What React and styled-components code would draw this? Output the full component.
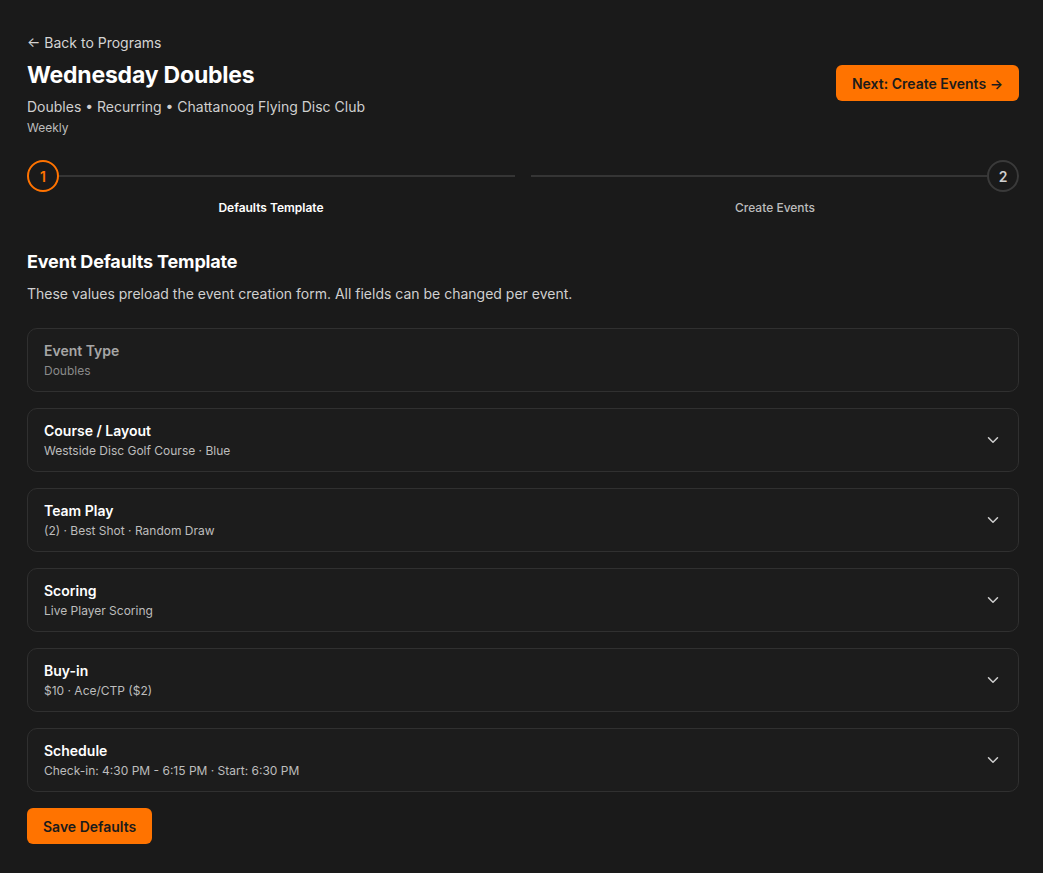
import React from 'react'
import styled, { createGlobalStyle } from 'styled-components'

const Global = createGlobalStyle`
  html, body {
    margin: 0;
    padding: 0;
    background: #1a1a1a;
    font-family: Inter, "Noto Sans", sans-serif;
    color: #fff;
  }
`

const Page = styled.div`
  padding: 32px 24px 28px 27px;
  max-width: 992px;
`

const Header = styled.header`
  display: flex;
  justify-content: space-between;
  align-items: flex-start;
`

const BackLink = styled.a`
  display: inline-block;
  font-size: 14px;
  line-height: 20px;
  color: #d4d4d4;
  text-decoration: none;
  cursor: pointer;
`

const Title = styled.h1`
  margin: 8px 0 0;
  font-size: 23px;
  line-height: 28px;
  font-weight: 700;
  letter-spacing: -0.2px;
`

const Meta = styled.div`
  margin-top: 8px;
  font-size: 14px;
  line-height: 20px;
  color: #cfcfcf;
`

const Small = styled.div`
  margin-top: 2px;
  font-size: 12px;
  line-height: 18px;
  color: #bdbdbd;
`

const Button = styled.button`
  height: 36px;
  padding: 0 16px;
  border: none;
  border-radius: 6px;
  background: #ff7300;
  color: #1b1b1b;
  font-family: inherit;
  font-size: 14px;
  font-weight: 600;
  cursor: pointer;
  margin-top: ${p => p.$top || 0}px;
`

const Stepper = styled.div`
  display: flex;
  gap: 16px;
  margin-top: 23px;
`

const Step = styled.div`
  flex: 1;
  display: flex;
  flex-direction: column;
  align-items: center;
`

const StepTrack = styled.div`
  width: 100%;
  display: flex;
  align-items: center;
  flex-direction: ${p => (p.$reverse ? 'row-reverse' : 'row')};
`

const Circle = styled.div`
  width: 32px;
  height: 32px;
  box-sizing: border-box;
  border-radius: 50%;
  border: 2px solid ${p => (p.$active ? '#ff7300' : '#3a3a3a')};
  color: ${p => (p.$active ? '#ff7300' : '#cfcfcf')};
  display: flex;
  align-items: center;
  justify-content: center;
  font-size: 14px;
  font-weight: 600;
  flex-shrink: 0;
`

const Line = styled.div`
  flex: 1;
  height: 2px;
  background: #353535;
`

const StepLabel = styled.div`
  margin-top: 8px;
  font-size: 12px;
  line-height: 16px;
  font-weight: ${p => (p.$active ? 600 : 500)};
  color: ${p => (p.$active ? '#fff' : '#bdbdbd')};
`

const SectionTitle = styled.h2`
  margin: 34px 0 0;
  font-size: 18px;
  line-height: 24px;
  font-weight: 700;
  letter-spacing: -0.15px;
`

const SectionDesc = styled.p`
  margin: 10px 0 0;
  font-size: 14px;
  line-height: 20px;
  color: #d0d0d0;
`

const CardList = styled.div`
  display: flex;
  flex-direction: column;
  gap: 16px;
  margin-top: 24px;
`

const Card = styled.div`
  height: 64px;
  box-sizing: border-box;
  border: 1px solid #303030;
  border-radius: 10px;
  background: #1c1c1c;
  padding: 0 16px;
  display: flex;
  align-items: center;
  justify-content: space-between;
  cursor: ${p => (p.$disabled ? 'default' : 'pointer')};
`

const CardText = styled.div`
  display: flex;
  flex-direction: column;
`

const CardTitle = styled.div`
  font-size: 14px;
  line-height: 20px;
  font-weight: 600;
  color: ${p => (p.$muted ? '#a6a6a6' : '#fff')};
`

const CardValue = styled.div`
  margin-top: 1px;
  font-size: 12px;
  line-height: 18px;
  color: ${p => (p.$muted ? '#8a8a8a' : '#bdbdbd')};
`

const Chevron = () => (
  <svg width="18" height="18" viewBox="0 0 24 24" fill="none" stroke="#cfcfcf" strokeWidth="2" strokeLinecap="round" strokeLinejoin="round">
    <path d="M6 9l6 6 6-6" />
  </svg>
)

const fields = [
  { title: 'Course / Layout', value: 'Westside Disc Golf Course · Blue' },
  { title: 'Team Play', value: '(2) · Best Shot · Random Draw' },
  { title: 'Scoring', value: 'Live Player Scoring' },
  { title: 'Buy-in', value: '$10 · Ace/CTP ($2)' },
  { title: 'Schedule', value: 'Check-in: 4:30 PM - 6:15 PM · Start: 6:30 PM' },
]

export default function App() {
  return (
    <Page>
      <Global />
      <Header>
        <div>
          <BackLink>← Back to Programs</BackLink>
          <Title>Wednesday Doubles</Title>
          <Meta>Doubles • Recurring • Chattanoog Flying Disc Club</Meta>
          <Small>Weekly</Small>
        </div>
        <Button $top={33}>Next: Create Events →</Button>
      </Header>

      <Stepper>
        <Step>
          <StepTrack>
            <Circle $active>1</Circle>
            <Line />
          </StepTrack>
          <StepLabel $active>Defaults Template</StepLabel>
        </Step>
        <Step>
          <StepTrack $reverse>
            <Circle>2</Circle>
            <Line />
          </StepTrack>
          <StepLabel>Create Events</StepLabel>
        </Step>
      </Stepper>

      <SectionTitle>Event Defaults Template</SectionTitle>
      <SectionDesc>These values preload the event creation form. All fields can be changed per event.</SectionDesc>

      <CardList>
        <Card $disabled>
          <CardText>
            <CardTitle $muted>Event Type</CardTitle>
            <CardValue $muted>Doubles</CardValue>
          </CardText>
        </Card>
        {fields.map(f => (
          <Card key={f.title}>
            <CardText>
              <CardTitle>{f.title}</CardTitle>
              <CardValue>{f.value}</CardValue>
            </CardText>
            <Chevron />
          </Card>
        ))}
      </CardList>

      <Button $top={16}>Save Defaults</Button>
    </Page>
  )
}
